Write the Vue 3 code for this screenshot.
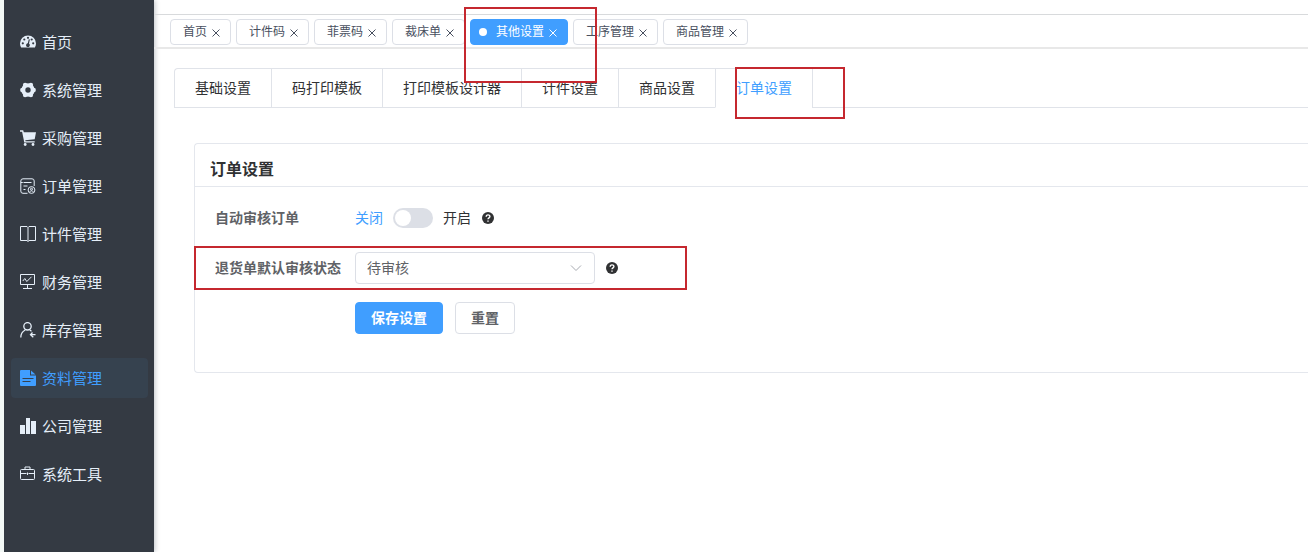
<script setup>
import { ref } from 'vue'

const menu = [
  { key: 'dashboard', label: '首页' },
  { key: 'gear', label: '系统管理' },
  { key: 'cart', label: '采购管理' },
  { key: 'order', label: '订单管理' },
  { key: 'book', label: '计件管理' },
  { key: 'board', label: '财务管理' },
  { key: 'user', label: '库存管理' },
  { key: 'doc', label: '资料管理' },
  { key: 'bars', label: '公司管理' },
  { key: 'case', label: '系统工具' },
]
const activeMenu = ref('doc')

const tags = ref(['首页', '计件码', '菲票码', '裁床单', '其他设置', '工序管理', '商品管理'])
const activeTag = ref('其他设置')
const closeTag = (name) => {
  tags.value = tags.value.filter((t) => t !== name)
}

const tabs = ['基础设置', '码打印模板', '打印模板设计器', '计件设置', '商品设置', '订单设置']
const activeTab = ref('订单设置')

const autoAudit = ref(false)
const returnStatus = ref('待审核')
const reset = () => {
  autoAudit.value = false
  returnStatus.value = '待审核'
}
</script>

<template>
  <div class="layout">
    <nav class="sidebar">
      <a
        v-for="m in menu"
        :key="m.key"
        href="#"
        class="menu-item"
        :class="{ active: m.key === activeMenu }"
        @click.prevent="activeMenu = m.key"
      >
        <svg class="menu-icon" viewBox="0 0 16 16" aria-hidden="true">
          <g v-if="m.key === 'dashboard'">
            <path fill="currentColor" d="M8 1.500a8 8 0 0 0-8 8c0 1.500.4 2.800 1.100 4h13.800c.7-1.200 1.100-2.500 1.100-4a8 8 0 0 0-8-8z" />
            <g class="hole">
              <circle cx="2.800" cy="9.300" r="1.100" />
              <circle cx="4.300" cy="5.500" r="1.100" />
              <circle cx="8" cy="3.800" r="1.100" />
              <circle cx="11.700" cy="5.500" r="1.100" />
              <circle cx="13.200" cy="9.300" r="1.100" />
              <path d="M8.800 5.300l1.100.3-.9 4a1.900 1.900 0 1 1-1.200-.3z" />
            </g>
          </g>
          <g v-else-if="m.key === 'gear'" fill="currentColor">
            <circle class="gear-ring" cx="8" cy="8" r="4.700" />
            <circle cx="13.700" cy="8" r="2.200" />
            <circle cx="10.900" cy="13" r="2.200" />
            <circle cx="5.100" cy="13" r="2.200" />
            <circle cx="2.300" cy="8" r="2.200" />
            <circle cx="5.100" cy="3" r="2.200" />
            <circle cx="10.900" cy="3" r="2.200" />
          </g>
          <g v-else-if="m.key === 'cart'" fill="currentColor">
            <path d="M0 .3h3.200l.6 2H16l-1.300 6.900-9.400 1 .2 1h9.200v1.400H4.300L2.100 1.700H0z" />
            <circle cx="5.200" cy="14.500" r="1.400" />
            <circle cx="13" cy="14.500" r="1.400" />
          </g>
          <g v-else-if="m.key === 'order'" class="line">
            <path d="M7.500 15.300H3A2.200 2.200 0 0 1 .8 13V3A2.200 2.200 0 0 1 3 .8h9A2.200 2.200 0 0 1 14.200 3v5M.8 4.500h2M3.500 4.500h8M3.500 8h4M3.500 11.500h2" />
            <circle cx="11.500" cy="12" r="3.400" />
            <circle cx="11.500" cy="11.200" r="1" />
            <path d="M9.700 13.800c.6-1.300 3-1.300 3.600 0" />
          </g>
          <g v-else-if="m.key === 'book'" class="line">
            <path d="M7 .5H.5v14H7L8 15.500l1-1h6.500V.5H9L8 1.500zM8 1.500v14" />
          </g>
          <g v-else-if="m.key === 'board'" class="line">
            <path d="M.5.500h14v10H.5zM7.500 10.500v4M3 14.500h9M2.800 7l2-2.500 2 3 4.700-4.700" />
          </g>
          <g v-else-if="m.key === 'user'" class="line user-line">
            <circle cx="7.500" cy="4.300" r="3.700" />
            <path d="M.8 15.500c0-4 2-6.300 4.400-7.500M9.800 8l1.700 1.300M15.500 12.700h-5M12.500 10.500l-2 2.200 2.800 2.500" />
          </g>
          <g v-else-if="m.key === 'doc'">
            <path fill="currentColor" d="M1 0h9v5.500h6V15a1 1 0 0 1-1 1H1a1 1 0 0 1-1-1V1a1 1 0 0 1 1-1zM11 .5l4.500 4H11z" />
            <path class="slot" d="M2.500 8.500h11M2.500 11.500h8" />
          </g>
          <path v-else-if="m.key === 'bars'" fill="currentColor" d="M0 7h5v9H0zM6 0h4v16H6zM11 3h5v13h-5z" />
          <g v-else class="line">
            <path d="M1.500 3.500h12a1 1 0 0 1 1 1v8a1 1 0 0 1-1 1h-12a1 1 0 0 1-1-1v-8a1 1 0 0 1 1-1zM5 3.500v-2.500h5v2.500M.5 7.500h6M8.500 7.500h6M7.500 6.500v2.500" />
          </g>
        </svg>
        <span class="menu-text">{{ m.label }}</span>
      </a>
    </nav>

    <main class="main">
      <div class="tagbar">
        <div
          v-for="t in tags"
          :key="t"
          class="tag"
          :class="{ active: t === activeTag }"
        >
          <i v-if="t === activeTag" class="dot"></i>
          <a href="#" class="tag-link" @click.prevent="activeTag = t">{{ t }}</a>
          <button type="button" class="tag-close" :aria-label="'关闭' + t" @click="closeTag(t)">
            <svg viewBox="0 0 8 8" aria-hidden="true"><path d="M.5.500l7 7M7.500.500l-7 7" /></svg>
          </button>
          <span v-if="t === '其他设置'" class="mark mark-tag"></span>
        </div>
      </div>

      <div class="content">
        <div class="tabs" role="tablist">
          <button
            v-for="t in tabs"
            :key="t"
            type="button"
            role="tab"
            class="tab"
            :class="{ active: t === activeTab }"
            :aria-selected="t === activeTab"
            @click="activeTab = t"
          >
            {{ t }}<span v-if="t === '订单设置'" class="mark mark-tab"></span>
          </button>
          <div class="tabs-rest"></div>
        </div>

        <section class="card">
          <h2 class="card-title">订单设置</h2>
          <form class="form" @submit.prevent>
            <div class="row">
              <label class="label" for="auto-audit">自动审核订单</label>
              <span class="switch-text" :class="{ on: !autoAudit }">关闭</span>
              <input id="auto-audit" v-model="autoAudit" class="switch" type="checkbox" role="switch" />
              <span class="switch-text" :class="{ on: autoAudit }">开启</span>
              <svg class="help" viewBox="0 0 12 12" aria-hidden="true">
                <circle cx="6" cy="6" r="6" />
                <path d="M4.200 4.700c0-2.400 3.700-2.300 3.700-.2C7.900 5.900 6 5.800 6 7.300M6 8.400v1.300" />
              </svg>
            </div>
            <div class="row">
              <label class="label" for="return-status">退货单默认审核状态</label>
              <div class="select-box">
                <select id="return-status" v-model="returnStatus" class="select">
                  <option>待审核</option>
                </select>
                <svg class="chevron" viewBox="0 0 12 12" aria-hidden="true"><path d="M1 3.500l5 5 5-5" /></svg>
              </div>
              <svg class="help" viewBox="0 0 12 12" aria-hidden="true">
                <circle cx="6" cy="6" r="6" />
                <path d="M4.200 4.700c0-2.400 3.700-2.300 3.700-.2C7.900 5.900 6 5.800 6 7.300M6 8.400v1.300" />
              </svg>
              <span class="mark mark-row"></span>
            </div>
            <div class="row actions">
              <button type="submit" class="btn primary">保存设置</button>
              <button type="button" class="btn" @click="reset">重置</button>
            </div>
          </form>
        </section>
      </div>
    </main>
  </div>
</template>

<style>
body {
  margin: 0;
  background: #fff;
}
</style>

<style scoped>
.layout,
.layout * {
  box-sizing: border-box;
}
.layout {
  display: flex;
  min-height: 100vh;
  overflow: hidden;
  border-left: 4px solid #f3f8f6;
  font-family: "Liberation Sans", "Noto Sans CJK SC", sans-serif;
  font-size: 14px;
  color: #303133;
}
button,
select {
  font-family: inherit;
}

.sidebar {
  flex: 0 0 150px;
  display: flex;
  flex-direction: column;
  gap: 8px;
  padding: 22px 6px 22px 7px;
  background: #343a43;
  box-shadow: 1px 0 5px rgba(0, 21, 41, 0.25);
}
.menu-item {
  display: flex;
  align-items: center;
  gap: 6px;
  height: 40px;
  padding: 0 9px;
  border-radius: 4px;
  color: #e5eef8;
  font-size: 15px;
  line-height: 20px;
  text-decoration: none;
}
.menu-item.active {
  background: #36424f;
  color: #409eff;
}
.menu-text {
  padding-top: 2px;
}
.menu-icon {
  flex: none;
  width: 16px;
  height: 16px;
}
.hole {
  fill: #343a43;
}
.gear-ring {
  fill: none;
  stroke: currentColor;
  stroke-width: 4;
}
.line {
  fill: none;
  stroke: currentColor;
  stroke-width: 1;
}
.user-line {
  stroke-width: 1.3;
}
.slot {
  fill: none;
  stroke: #36424f;
  stroke-width: 1.2;
}

.main {
  flex: 1;
  min-width: 0;
}
.tagbar {
  display: flex;
  gap: 5px;
  height: 35px;
  margin-top: 14px;
  padding: 4px 16px 0;
  border-top: 1px solid #d8dadc;
  border-bottom: 2px solid #e8e8e8;
}
.tag {
  position: relative;
  display: flex;
  flex: none;
  align-items: center;
  height: 26px;
  padding: 0 10px 0 12px;
  border: 1px solid #dcdfe6;
  border-radius: 4px;
  color: #495060;
  font-size: 12px;
  line-height: 24px;
}
.tag.active {
  padding-left: 8px;
  border-color: #409eff;
  background: #409eff;
  color: #fff;
}
.dot {
  width: 8px;
  height: 8px;
  margin-right: 9px;
  border-radius: 50%;
  background: #fff;
}
.tag-link {
  color: inherit;
  text-decoration: none;
}
.tag-close {
  display: flex;
  margin: 2px 0 0 5px;
  padding: 0;
  border: 0;
  background: none;
  color: inherit;
}
.tag-close svg {
  width: 8px;
  height: 8px;
  fill: none;
  stroke: currentColor;
}

.content {
  padding: 19px 0 0 20px;
}
.tabs {
  display: flex;
}
.tab {
  position: relative;
  height: 40px;
  padding: 0 20px;
  border: 1px solid #e0e3e9;
  border-right: 0;
  background: #fff;
  color: #303133;
  font-size: 14px;
  line-height: 38px;
}
.tab:first-child {
  border-top-left-radius: 4px;
}
.tab.active {
  border-bottom-color: #fff;
  color: #409eff;
}
.tabs-rest {
  flex: 1;
  border-left: 1px solid #e0e3e9;
  border-bottom: 1px solid #e0e3e9;
}

.card {
  margin: 35px 0 0 20px;
  border: 1px solid #e4e7ed;
  border-right: 0;
  border-radius: 4px 0 0 4px;
}
.card-title {
  margin: 0;
  padding: 14px 15px 4px;
  border-bottom: 1px solid #e4e7ed;
  font-size: 16px;
  font-weight: 700;
  line-height: 24px;
}
.form {
  padding: 15px 20px 20px;
}
.row {
  position: relative;
  display: flex;
  align-items: center;
  height: 32px;
  margin-bottom: 18px;
  line-height: 20px;
}
.label {
  flex: 0 0 140px;
  color: #606266;
  font-weight: 700;
}
.switch-text.on {
  color: #409eff;
}
.switch {
  appearance: none;
  display: flex;
  align-items: center;
  width: 40px;
  height: 20px;
  margin: 0 10px;
  padding: 0 2px;
  border-radius: 10px;
  background: #dcdfe6;
}
.switch::before {
  content: "";
  width: 16px;
  height: 16px;
  border-radius: 50%;
  background: #fff;
}
.switch:checked {
  justify-content: flex-end;
  background: #409eff;
}
.help {
  width: 12px;
  height: 12px;
  margin-left: 11px;
  fill: #303133;
}
.help path {
  fill: none;
  stroke: #fff;
  stroke-width: 1.4;
}
.select-box {
  display: grid;
  align-items: center;
  width: 240px;
}
.select,
.chevron {
  grid-area: 1 / 1;
}
.select {
  appearance: none;
  width: 100%;
  height: 32px;
  padding: 0 30px 0 11px;
  border: 1px solid #dcdfe6;
  border-radius: 4px;
  background: #fff;
  color: #606266;
  font-size: 14px;
}
.chevron {
  justify-self: end;
  width: 12px;
  height: 12px;
  margin-right: 13px;
  fill: none;
  stroke: #a8abb2;
  pointer-events: none;
}
.actions {
  gap: 12px;
  padding-left: 140px;
}
.btn {
  height: 32px;
  padding: 0 15px;
  border: 1px solid #dcdfe6;
  border-radius: 4px;
  background: #fff;
  color: #606266;
  font-size: 14px;
  font-weight: 700;
  line-height: 20px;
}
.btn.primary {
  border-color: #409eff;
  background: #409eff;
  color: #fff;
}

.mark {
  position: absolute;
  z-index: 2;
  border: 2px solid #c5282f;
  pointer-events: none;
}
.mark-tag {
  top: -13px;
  left: -7px;
  width: 133px;
  height: 76px;
}
.mark-tab {
  top: -2px;
  left: 19px;
  width: 110px;
  height: 52px;
}
.mark-row {
  top: -6px;
  left: -21px;
  width: 493px;
  height: 44px;
}
</style>
